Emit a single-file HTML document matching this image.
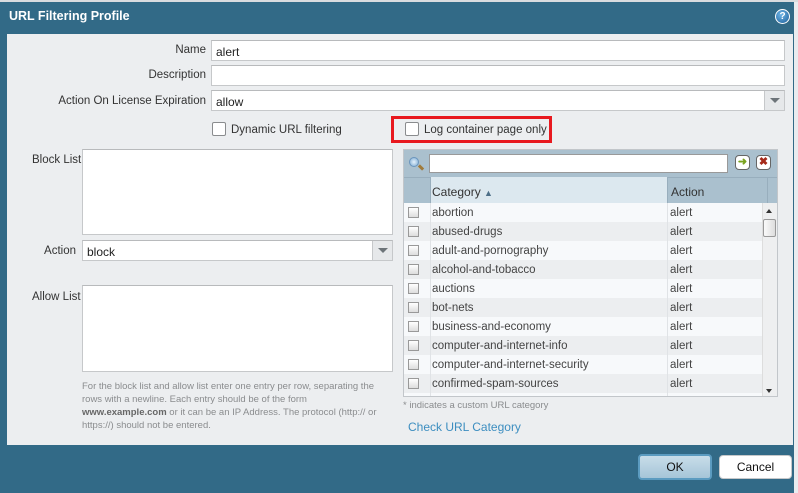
<!DOCTYPE html>
<html><head><meta charset="utf-8"><style>
*{box-sizing:border-box;margin:0;padding:0}
body{width:798px;height:493px;overflow:hidden;background:#e9ecef;font-family:"Liberation Sans",sans-serif;font-size:11.5px;color:#222;position:relative}
.a{position:absolute}
.dlg{left:0;top:2px;width:794px;height:491px;background:#326a87}
.panel{left:7px;top:34px;width:786px;height:411px;background:#eceef0}
.lbl{text-align:right;color:#333}
.inp{background:#fff;border:1px solid #c6c8ca;border-top-color:#b8babc;padding:4px 4px 2px;font-size:12px}
.dd{background:#e6e8ea;border-left:1px solid #c6c8ca}
.cb{width:14px;height:14px;border:1px solid #8a8c8e;border-radius:2px;background:#fff}
.row{left:0;width:358px;height:19px}
.row span{position:absolute;top:4px;font-size:11.5px;color:#444}
.scb{width:11px;height:11px;border:1px solid #999;background:linear-gradient(#fff,#ddd);left:4px;top:4px}
</style></head><body>
<div class="a" style="left:0;top:0;width:798px;height:2px;background:#d9dcdf"></div>
<div class="a dlg"></div>
<div class="a" style="left:9px;top:9px;color:#fff;font-weight:bold;font-size:12.5px">URL Filtering Profile</div>
<div class="a" style="left:775px;top:9px;width:15px;height:15px;border-radius:50%;background:radial-gradient(circle at 40% 35%,#6fb5e6,#1d5f9a);border:1px solid #fff;color:#fff;font-size:10px;font-weight:bold;text-align:center;line-height:13px">?</div>
<div class="a panel"></div>

<div class="a lbl" style="left:60px;top:44px;width:146px">Name</div>
<div class="a inp" style="left:211px;top:40px;width:574px;height:21px">alert</div>
<div class="a lbl" style="left:60px;top:69px;width:146px">Description</div>
<div class="a inp" style="left:211px;top:65px;width:574px;height:21px"></div>
<div class="a lbl" style="left:40px;top:95px;width:166px">Action On License Expiration</div>
<div class="a inp" style="left:211px;top:90px;width:574px;height:21px">allow</div>
<div class="a dd" style="left:764px;top:91px;width:20px;height:19px"><div class="a" style="left:5px;top:7px;border:5px solid transparent;border-top:5px solid #6d7479;border-bottom:0"></div></div>

<div class="a cb" style="left:212px;top:122px"></div>
<div class="a" style="left:231px;top:124px;color:#333">Dynamic URL filtering</div>
<div class="a" style="left:391px;top:116px;width:161px;height:27px;border:3px solid #e8191f"></div>
<div class="a cb" style="left:405px;top:122px"></div>
<div class="a" style="left:424px;top:124px;color:#333">Log container page only</div>

<div class="a" style="left:32px;top:154px;color:#333">Block List</div>
<div class="a inp" style="left:82px;top:149px;width:311px;height:86px"></div>
<div class="a lbl" style="left:30px;top:245px;width:46px">Action</div>
<div class="a inp" style="left:82px;top:240px;width:311px;height:21px">block</div>
<div class="a dd" style="left:372px;top:241px;width:20px;height:19px"><div class="a" style="left:5px;top:7px;border:5px solid transparent;border-top:5px solid #6d7479;border-bottom:0"></div></div>
<div class="a" style="left:32px;top:291px;color:#333">Allow List</div>
<div class="a inp" style="left:82px;top:285px;width:311px;height:87px"></div>
<div class="a" style="left:82px;top:380px;width:300px;font-size:9.5px;line-height:13px;color:#8a8c8e">For the block list and allow list enter one entry per row, separating the rows with a newline. Each entry should be of the form <b style="color:#666">www.example.com</b> or it can be an IP Address. The protocol (http:// or https://) should not be entered.</div>

<div class="a" style="left:403px;top:149px;width:375px;height:248px;border:1px solid #c2c6ca;background:#f7f9fb;overflow:hidden">
 <div class="a" style="left:0;top:0;width:373px;height:27px;background:#aac0ce"></div>
 <div class="a" style="left:5px;top:7px;width:10px;height:10px;border-radius:50%;background:radial-gradient(#e4f1fb,#7aa9d2);border:1px solid #6a94bc"></div>
 <div class="a" style="left:14px;top:16px;width:6px;height:3px;background:#a07a3a;transform:rotate(45deg)"></div>
 <div class="a" style="left:25px;top:4px;width:299px;height:19px;background:#fff;border:1px solid #999"></div>
 <div class="a" style="left:331px;top:5px;width:15px;height:15px;border:1px solid #666;border-radius:4px;background:#fff;color:#7aa31f;font-size:11px;font-weight:bold;text-align:center;line-height:12px">➜</div>
 <div class="a" style="left:352px;top:5px;width:15px;height:15px;border:1px solid #666;border-radius:4px;background:#fff;color:#a62a1a;font-size:11px;font-weight:bold;text-align:center;line-height:13px">✖</div>
 <div class="a" style="left:0;top:27px;width:373px;height:26px;background:#aac0ce;border-top:1px solid #98aebd"></div>
 <div class="a" style="left:26px;top:27px;width:238px;height:26px;background:#dce8ef;border-left:1px solid #98aebd;border-right:1px solid #98aebd"></div>
 <div class="a" style="left:363px;top:27px;width:1px;height:26px;background:#98aebd"></div>
 <div class="a" style="left:28px;top:35px;font-size:12px;color:#333">Category <span style="font-size:9px;color:#4d6f88">▲</span></div>
 <div class="a" style="left:267px;top:35px;font-size:12px;color:#333">Action</div>
 <div class="a" style="left:0;top:53px;width:373px;height:195px">
  <div class="a row" style="top:0;background:#f7f9fb"><div class="a scb"></div><span style="left:28px">abortion</span><span style="left:266px">alert</span></div>
  <div class="a row" style="top:19px;background:#eceef0"><div class="a scb"></div><span style="left:28px">abused-drugs</span><span style="left:266px">alert</span></div>
  <div class="a row" style="top:38px;background:#f7f9fb"><div class="a scb"></div><span style="left:28px">adult-and-pornography</span><span style="left:266px">alert</span></div>
  <div class="a row" style="top:57px;background:#eceef0"><div class="a scb"></div><span style="left:28px">alcohol-and-tobacco</span><span style="left:266px">alert</span></div>
  <div class="a row" style="top:76px;background:#f7f9fb"><div class="a scb"></div><span style="left:28px">auctions</span><span style="left:266px">alert</span></div>
  <div class="a row" style="top:95px;background:#eceef0"><div class="a scb"></div><span style="left:28px">bot-nets</span><span style="left:266px">alert</span></div>
  <div class="a row" style="top:114px;background:#f7f9fb"><div class="a scb"></div><span style="left:28px">business-and-economy</span><span style="left:266px">alert</span></div>
  <div class="a row" style="top:133px;background:#eceef0"><div class="a scb"></div><span style="left:28px">computer-and-internet-info</span><span style="left:266px">alert</span></div>
  <div class="a row" style="top:152px;background:#f7f9fb"><div class="a scb"></div><span style="left:28px">computer-and-internet-security</span><span style="left:266px">alert</span></div>
  <div class="a row" style="top:171px;background:#eceef0"><div class="a scb"></div><span style="left:28px">confirmed-spam-sources</span><span style="left:266px">alert</span></div>
  <div class="a row" style="top:190px;background:#f7f9fb"><div class="a scb"></div></div>
  <div class="a" style="left:26px;top:0;width:1px;height:195px;background:#e0e3e6"></div>
  <div class="a" style="left:263px;top:0;width:1px;height:195px;background:#e0e3e6"></div>
  <div class="a" style="left:358px;top:0;width:15px;height:195px;background:#eeeff0;border-left:1px solid #ddd"></div>
  <div class="a" style="left:362px;top:6px;border:3px solid transparent;border-bottom:4px solid #333;border-top:0"></div>
  <div class="a" style="left:359px;top:16px;width:13px;height:18px;border:1px solid #999;border-radius:2px;background:linear-gradient(90deg,#fafafa,#ddd)"></div>
  <div class="a" style="left:362px;top:186px;border:3px solid transparent;border-top:4px solid #333;border-bottom:0"></div>
 </div>
</div>
<div class="a" style="left:403px;top:400px;font-size:9.5px;color:#8a8c8e">* indicates a custom URL category</div>
<div class="a" style="left:408px;top:420px;font-size:12px;color:#3d8ec0">Check URL Category</div>

<div class="a" style="left:638px;top:454px;width:74px;height:26px;border:2px solid #5b9bc0;border-radius:4px;background:linear-gradient(#c8dde9,#a6c5d8);text-align:center;line-height:22px;font-size:12px;color:#111">OK</div>
<div class="a" style="left:719px;top:455px;width:73px;height:24px;border:1px solid #c6c8ca;border-radius:4px;background:#fff;text-align:center;line-height:22px;font-size:12px;color:#111">Cancel</div>
</body></html>
